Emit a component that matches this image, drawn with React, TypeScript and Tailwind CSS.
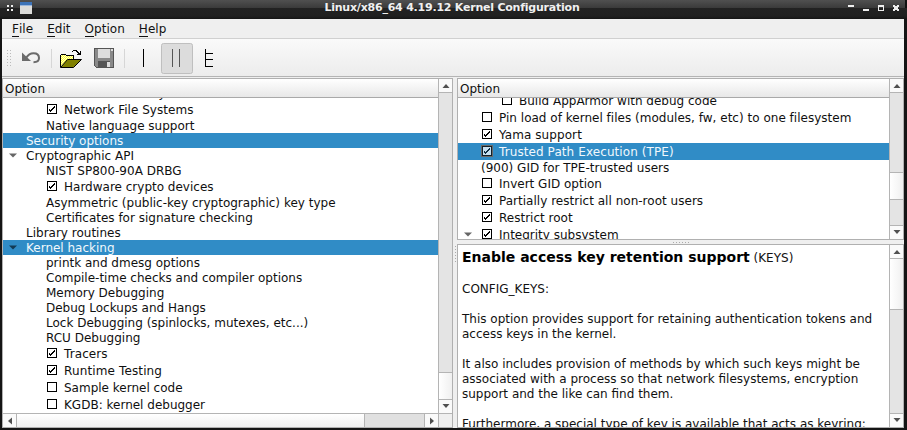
import React from "react";

const rowText = "whitespace-pre font-['DejaVu_Sans',sans-serif] text-[12px]";

type Row = { t: string; pad: string; check?: boolean; sel?: boolean; arrow?: boolean; track?: string; raised?: boolean };

function Check({ on, sel }: { on: boolean; sel?: boolean }) {
  return (
    <svg width="12" height="13" viewBox="0 0 12 13" className="mr-[6px] shrink-0" shapeRendering="crispEdges">
      {sel && <rect width="12" height="12" fill="#6b6a68" />}
      <rect x="1.5" y="1.5" width="9" height="9" fill={sel ? "#c7e0f0" : "#fff"} stroke={sel ? "#12202a" : "#000"} />
      {on && (
        <path d="M3 6h1v1h1v-1h1v-1h1v-1h1v-1h1v2h-1v1h-1v1h-1v1h-1v1h-1v-1h-1z" fill={sel ? "#0d2c40" : "#000"} />
      )}
    </svg>
  );
}

function TreeRow({ r }: { r: Row }) {
  const boxed = r.check !== undefined;
  return (
    <div
      className={`${rowText} flex shrink-0 ${boxed ? "h-[17px]" : "h-[15px]"} ${
        r.sel ? "bg-[#308cc6] text-[#f1f8fc]" : "text-[#101010]"
      }`}
    >
      <div className={`${r.pad} flex shrink-0 items-center`}>
        {r.arrow && (
          <svg width="8" height="5" viewBox="0 0 8 5" className="ml-[6px]">
            <path d="M0 .5h8L4 4.500z" fill={r.sel ? "#123a54" : "#666"} />
          </svg>
        )}
      </div>
      {boxed && (
        <div className="flex items-center">
          <Check on={!!r.check} sel={r.sel} />
        </div>
      )}
      <span className={`leading-[15px] ${boxed ? "mt-[2px]" : r.raised ? "mt-0" : "mt-px"} ${r.track ?? ""}`}>{r.t}</span>
    </div>
  );
}

const left: Row[] = [
  { t: "Miscellaneous filesystems", pad: "w-[43px]", raised: true },
  { t: "Network File Systems", pad: "w-[43px]", check: true, track: "tracking-[0.03px]" },
  { t: "Native language support", pad: "w-[43px]" },
  { t: "Security options", pad: "w-[23px]", sel: true },
  { t: "Cryptographic API", pad: "w-[23px]", arrow: true },
  { t: "NIST SP800-90A DRBG", pad: "w-[43px]" },
  { t: "Hardware crypto devices", pad: "w-[43px]", check: true },
  { t: "Asymmetric (public-key cryptographic) key type", pad: "w-[43px]", track: "tracking-[0.01px]" },
  { t: "Certificates for signature checking", pad: "w-[43px]" },
  { t: "Library routines", pad: "w-[23px]" },
  { t: "Kernel hacking", pad: "w-[23px]", sel: true, arrow: true },
  { t: "printk and dmesg options", pad: "w-[43px]" },
  { t: "Compile-time checks and compiler options", pad: "w-[43px]" },
  { t: "Memory Debugging", pad: "w-[43px]" },
  { t: "Debug Lockups and Hangs", pad: "w-[43px]" },
  { t: "Lock Debugging (spinlocks, mutexes, etc...)", pad: "w-[43px]" },
  { t: "RCU Debugging", pad: "w-[43px]" },
  { t: "Tracers", pad: "w-[43px]", check: true, track: "tracking-[0.1px]" },
  { t: "Runtime Testing", pad: "w-[43px]", check: true, track: "tracking-[0.13px]" },
  { t: "Sample kernel code", pad: "w-[43px]", check: false },
  { t: "KGDB: kernel debugger", pad: "w-[43px]", check: false },
];

const right: Row[] = [
  { t: "Build AppArmor with debug code", pad: "w-[43px]", check: false },
  { t: "Pin load of kernel files (modules, fw, etc) to one filesystem", pad: "w-[23px]", check: false, track: "tracking-[0.015px]" },
  { t: "Yama support", pad: "w-[23px]", check: true, track: "tracking-[0.08px]" },
  { t: "Trusted Path Execution (TPE)", pad: "w-[23px]", check: true, sel: true, track: "tracking-[0.09px]" },
  { t: "(900) GID for TPE-trusted users", pad: "w-[23px]" },
  { t: "Invert GID option", pad: "w-[23px]", check: false },
  { t: "Partially restrict all non-root users", pad: "w-[23px]", check: true, track: "tracking-[0.02px]" },
  { t: "Restrict root", pad: "w-[23px]", check: true },
  { t: "Integrity subsystem", pad: "w-[23px]", check: true, arrow: true },
];

function Arrow({ dir }: { dir: "up" | "down" | "left" | "right" }) {
  const d = { up: "M0.5 6h7L4 2z", down: "M0.5 1h7L4 5z", left: "M6 .5v7L2 4z", right: "M2 .5v7l4-3.500z" }[dir];
  return (
    <svg width="8" height="8" viewBox="0 0 8 8">
      <path d={d} fill="#505050" />
    </svg>
  );
}

function VBar({ before, thumb }: { before: string; thumb: string }) {
  return (
    <div className="flex w-[14px] shrink-0 flex-col border-l border-[#b4b4b4] bg-[#e4e4e4]">
      <div className="flex h-[14px] shrink-0 items-center justify-center border-b border-[#b4b4b4] bg-[#fafafa]">
        <Arrow dir="up" />
      </div>
      <div className={`${before} shrink-0`} />
      <div className={`${thumb} shrink-0 border-[#b4b4b4] bg-linear-to-r from-white to-[#f0f0f0]`} />
      <div className="flex-1" />
      <div className="flex h-[14px] shrink-0 items-center justify-center border-t border-[#b4b4b4] bg-[#fafafa]">
        <Arrow dir="down" />
      </div>
    </div>
  );
}

function Header() {
  return (
    <div className={`${rowText} h-[19px] shrink-0 border-b border-[#a9a9a9] bg-linear-to-b from-white to-[#e8e8e8] pt-[2px] pl-[2px] leading-[16px] text-[#101010]`}>
      Option
    </div>
  );
}

function Menu({ k, rest }: { k: string; rest: string }) {
  return (
    <span className="flex">
      <span className="h-[15px] border-b border-[#111] leading-[15px]">{k}</span>
      <span className="leading-[15px]">{rest}</span>
    </span>
  );
}

export default function App() {
  return (
    <div className="flex h-[430px] w-[907px] flex-col overflow-hidden bg-[#151515]">
      <div className="flex h-[19px] shrink-0 items-start bg-[linear-gradient(#505050_0px,#3a3a3a_8px,#222_8px,#202020_16px,#151515_19px)]">
        <svg width="60" height="19" shapeRendering="crispEdges">
          <path d="M7 5h2v2h-2zM11 5h2v2h-2zM7 9h2v2h-2zM11 9h2v2h-2z" fill="#eee" />
          <rect x="20" y="2" width="12" height="12" fill="#dcdcda" />
          <rect x="20" y="2" width="12" height="3" fill="#3c73b8" />
          <rect x="20" y="5" width="12" height="1" fill="#9bb7dc" />
        </svg>
        <div className="flex-1 text-center font-['DejaVu_Sans',sans-serif] text-[11px] leading-[15px] font-bold tracking-[-0.22px] text-[#f0f0f0]">
          Linux/x86_64 4.19.12 Kernel Configuration
        </div>
        <svg width="63" height="19" shapeRendering="crispEdges">
          <path d="M4 5h6v2h-6zM19 9h6v2h-6z" fill="#eee" />
          <path d="M34 5h6v6h-6zM35 7v3h4v-3z" fill="#eee" fillRule="evenodd" />
          <path d="M49 5h2v1h2v-1h2v2h-1v2h1v2h-2v-1h-2v1h-2v-2h1v-2h-1z" fill="#eee" />
          <path d="M61 0h2v8h-2z" fill="#111" />
        </svg>
      </div>

      <div className="mr-[3px] ml-[2px] flex h-[409px] flex-col bg-[#efefef]">
        <div className="flex h-[20px] shrink-0 items-start gap-[14px] border-b border-[#d0d0d0] pt-[3px] pl-[10px] font-['DejaVu_Sans',sans-serif] text-[12px] tracking-[0.04px] text-[#111]">
          <Menu k="F" rest="ile" />
          <Menu k="E" rest="dit" />
          <Menu k="O" rest="ption" />
          <Menu k="H" rest="elp" />
        </div>
        <div className="h-[38px] shrink-0 border-b border-[#b4b4b4] bg-linear-to-b from-[#fafafa] to-[#ececec]">
          <svg width="230" height="37" viewBox="2 39 230 37" shapeRendering="crispEdges">
            <defs>
              <pattern id="dither" width="2" height="2" patternUnits="userSpaceOnUse">
                <rect width="2" height="2" fill="#ffff30" />
                <path d="M0 0h1v1h-1zM1 1h1v1h-1z" fill="#ffffd0" />
              </pattern>
            </defs>
            {[50, 53, 56, 59, 62, 65].map((y) => (
              <path key={y} d={`M7 ${y}h1v1h-1zM10 ${y}h1v1h-1z`} fill="#bbb" />
            ))}
            <g shapeRendering="auto">
              <path d="M22 52.500V61h9z" fill="#6b6b6b" />
              <path d="M26 58Q29 53.200 33.500 53.200Q39 53.200 39 58Q39 62.200 33.500 62.200" fill="none" stroke="#6b6b6b" strokeWidth="2" />
            </g>
            <path d="M51 49h1v19h-1zM124 49h1v19h-1z" fill="#d6d6d6" />
            <path d="M60.500 66.500v-11l1-1h4l1 1h7v5" fill="url(#dither)" stroke="#000" />
            <path d="M60.500 67.500l7-8h14l-8 8z" fill="#808000" stroke="#000" shapeRendering="auto" />
            <path d="M72 51h1v-1h4v1h1v1h1v1h1v-2h1v4h-4v-1h1v-1h-1v-1h-1v-1h-3v1h-1z" fill="#000" />
            <path d="M94.500 48.500h19v19h-17l-2-2z" fill="#898989" stroke="#555" />
            <rect x="98" y="49" width="12" height="9" fill="#ddd" />
            <rect x="111" y="49" width="2" height="2" fill="#ddd" />
            <rect x="98" y="61" width="12" height="6" fill="#555" />
            <rect x="107" y="62" width="3" height="5" fill="#ddd" />
            <path d="M143 49h1v18h-1z" fill="#000" />
            <rect x="161.500" y="43.500" width="31" height="30" rx="2" fill="#dcdcdc" stroke="#bfbfbf" shapeRendering="auto" />
            <path d="M172 49h1v18h-1zM179 49h1v18h-1z" fill="#555" />
            <path d="M205 49h1v18h-1zM206 53h7v1h-7zM206 59h7v1h-7zM206 66h7v1h-7z" fill="#000" />
          </svg>
        </div>

        <div className="mt-px flex h-[350px] shrink-0">
          <div className="flex w-[451px] shrink-0 flex-col border border-[#b0b0b0] bg-white">
            <div className="flex h-[334px] shrink-0">
              <div className="flex min-w-0 flex-1 flex-col">
                <Header />
                <div className="flex h-[315px] flex-col justify-end overflow-hidden">
                  {left.map((r) => (
                    <TreeRow key={r.t} r={r} />
                  ))}
                </div>
              </div>
              <VBar before="h-[279px]" thumb="h-[27px] border-t" />
            </div>
            <div className="flex h-[14px] border-t border-[#b4b4b4] bg-[#e0e0e0]">
              <div className="flex w-[14px] items-center justify-center border-r border-[#b4b4b4] bg-[#fafafa]">
                <Arrow dir="left" />
              </div>
              <div className="w-[348px] border-r border-[#b4b4b4] bg-linear-to-b from-white to-[#f0f0f0]" />
              <div className="flex-1" />
              <div className="flex w-[14px] items-center justify-center border-l border-[#b4b4b4] bg-[#fafafa]">
                <Arrow dir="right" />
              </div>
              <div className="w-[14px] border-l border-[#b4b4b4] bg-[#efefef]" />
            </div>
          </div>

          <div className="flex w-[4px] shrink-0 flex-col items-center gap-[2px] pt-[168px]">
            {[0, 1, 2, 3, 4, 5].map((i) => (
              <div key={i} className="size-px bg-[#aaa]" />
            ))}
          </div>

          <div className="flex w-[447px] shrink-0 flex-col">
            <div className="flex h-[162px] shrink-0 border border-[#b0b0b0] bg-white">
              <div className="flex min-w-0 flex-1 flex-col">
                <Header />
                <div className="h-[141px] overflow-hidden">
                  <div className="-mt-[6px] flex flex-col">
                    {right.map((r) => (
                      <TreeRow key={r.t} r={r} />
                    ))}
                  </div>
                </div>
              </div>
              <VBar before="h-[79px]" thumb="h-[28px] border-y" />
            </div>
            <div className="flex h-[4px] shrink-0 items-center justify-center gap-[2px]">
              {[0, 1, 2, 3, 4, 5].map((i) => (
                <div key={i} className="size-px bg-[#aaa]" />
              ))}
            </div>
            <div className="flex h-[184px] shrink-0 border border-[#b0b0b0] bg-white">
              <div className="min-w-0 flex-1 overflow-hidden pt-[4px] pl-[4px] font-['DejaVu_Sans',sans-serif] text-[12px] leading-[15px] whitespace-pre text-[#111]">
                <div className="h-[18px] leading-[17px]">
                  <span className="text-[14px] font-bold text-black">Enable access key retention support</span> (KEYS)
                </div>
                <div className="mt-[15px]">CONFIG_KEYS:</div>
                <div className="mt-[15px]">{"This option provides support for retaining authentication tokens and\naccess keys in the kernel."}</div>
                <div className="mt-[15px]">{"It also includes provision of methods by which such keys might be\nassociated with a process so that network filesystems, encryption\nsupport and the like can find them."}</div>
                <div className="mt-[15px]">Furthermore, a special type of key is available that acts as keyring:</div>
              </div>
              <VBar before="h-0" thumb="h-[51px] border-b" />
            </div>
          </div>
        </div>
      </div>
    </div>
  );
}
